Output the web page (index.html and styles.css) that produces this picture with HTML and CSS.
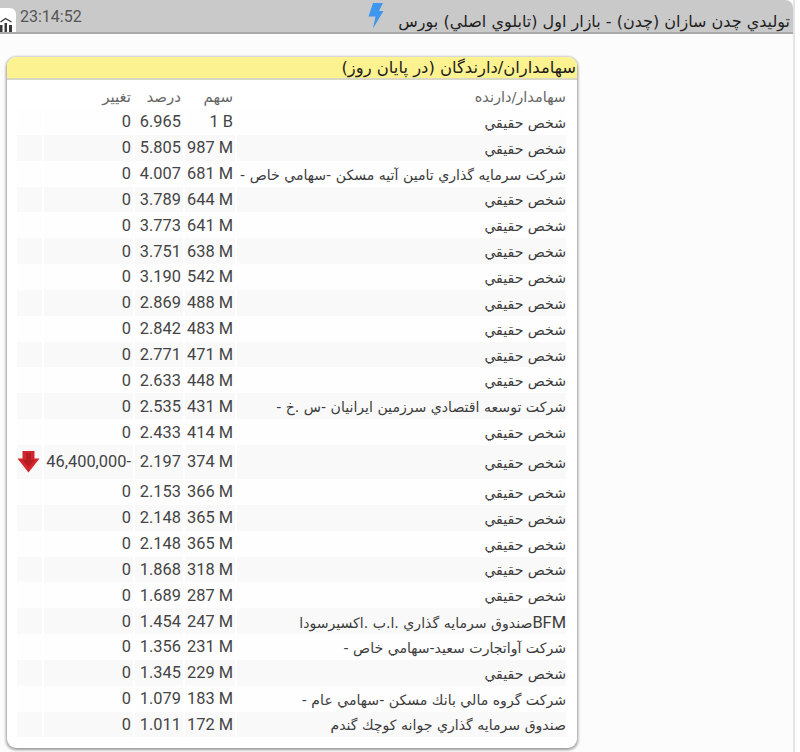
FILE: index.html
```html
<!DOCTYPE html>
<html lang="fa">
<head>
<meta charset="utf-8">
<title>سهامداران</title>
<link rel="stylesheet" href="styles.css">
</head>
<body>
<header class="topbar">
  <div class="chip">
    <svg class="chart" width="14" height="15" viewBox="0 0 14 15"><path d="M0 15V8h2.500v7zM4.500 15V6H7v9zM9 15V8h3v7z" fill="#3a3a3a"/><path d="M.5 5 5.500 1.500l6 3.500" fill="none" stroke="#3a3a3a" stroke-width="1.400"/></svg>
  </div>
  <div class="clock">23:14:52</div>
  <div class="spacer"></div>
  <svg class="bolt" width="17" height="27" viewBox="0 0 17 27"><path d="M6 1h10l-4 8h4.500L6 26.500l2.500-12H1.500z" fill="#3d97ee"/></svg>
  <div class="title" dir="rtl">توليدي چدن سازان (چدن) - بازار اول (تابلوي اصلي) بورس</div>
</header>
<section class="card">
  <h2 class="card-title" dir="rtl">سهامداران/دارندگان (در پايان روز)</h2>
  <table class="holders">
    <thead>
      <tr><th class="c-icon"></th><th class="c-change">تغيير</th><th class="c-pct">درصد</th><th class="c-share">سهم</th><th class="c-name" dir="rtl">سهامدار/دارنده</th></tr>
    </thead>
    <tbody>
      <tr><td></td><td>0</td><td>6.965</td><td>1 B</td><td class="c-name" dir="rtl">شخص حقيقي</td></tr>
      <tr><td></td><td>0</td><td>5.805</td><td>987 M</td><td class="c-name" dir="rtl">شخص حقيقي</td></tr>
      <tr><td></td><td>0</td><td>4.007</td><td>681 M</td><td class="c-name" dir="rtl">شركت سرمايه گذاري تامين آتيه مسكن -سهامي خاص -</td></tr>
      <tr><td></td><td>0</td><td>3.789</td><td>644 M</td><td class="c-name" dir="rtl">شخص حقيقي</td></tr>
      <tr><td></td><td>0</td><td>3.773</td><td>641 M</td><td class="c-name" dir="rtl">شخص حقيقي</td></tr>
      <tr><td></td><td>0</td><td>3.751</td><td>638 M</td><td class="c-name" dir="rtl">شخص حقيقي</td></tr>
      <tr><td></td><td>0</td><td>3.190</td><td>542 M</td><td class="c-name" dir="rtl">شخص حقيقي</td></tr>
      <tr><td></td><td>0</td><td>2.869</td><td>488 M</td><td class="c-name" dir="rtl">شخص حقيقي</td></tr>
      <tr><td></td><td>0</td><td>2.842</td><td>483 M</td><td class="c-name" dir="rtl">شخص حقيقي</td></tr>
      <tr><td></td><td>0</td><td>2.771</td><td>471 M</td><td class="c-name" dir="rtl">شخص حقيقي</td></tr>
      <tr><td></td><td>0</td><td>2.633</td><td>448 M</td><td class="c-name" dir="rtl">شخص حقيقي</td></tr>
      <tr><td></td><td>0</td><td>2.535</td><td>431 M</td><td class="c-name" dir="rtl">شركت توسعه اقتصادي سرزمين ايرانيان -س .خ -</td></tr>
      <tr><td></td><td>0</td><td>2.433</td><td>414 M</td><td class="c-name" dir="rtl">شخص حقيقي</td></tr>
      <tr class="tall"><td class="arrow-cell"><svg width="23" height="23" viewBox="0 0 23 23"><path d="M5.500 1h12v7.500H22.500L11.500 22.500 .5 8.500h5z" fill="#d3262c"/><path d="M9 3h5v7h3.500l-6 7-6-7H9z" fill="#b51d22"/></svg></td><td>46,400,000-</td><td>2.197</td><td>374 M</td><td class="c-name" dir="rtl">شخص حقيقي</td></tr>
      <tr><td></td><td>0</td><td>2.153</td><td>366 M</td><td class="c-name" dir="rtl">شخص حقيقي</td></tr>
      <tr><td></td><td>0</td><td>2.148</td><td>365 M</td><td class="c-name" dir="rtl">شخص حقيقي</td></tr>
      <tr><td></td><td>0</td><td>2.148</td><td>365 M</td><td class="c-name" dir="rtl">شخص حقيقي</td></tr>
      <tr><td></td><td>0</td><td>1.868</td><td>318 M</td><td class="c-name" dir="rtl">شخص حقيقي</td></tr>
      <tr><td></td><td>0</td><td>1.689</td><td>287 M</td><td class="c-name" dir="rtl">شخص حقيقي</td></tr>
      <tr><td></td><td>0</td><td>1.454</td><td>247 M</td><td class="c-name" dir="rtl"><span class="latin">BFM</span>صندوق سرمايه گذاري .ا.ب .اكسيرسودا</td></tr>
      <tr><td></td><td>0</td><td>1.356</td><td>231 M</td><td class="c-name" dir="rtl">شركت آواتجارت سعيد-سهامي خاص -</td></tr>
      <tr><td></td><td>0</td><td>1.345</td><td>229 M</td><td class="c-name" dir="rtl">شخص حقيقي</td></tr>
      <tr><td></td><td>0</td><td>1.079</td><td>183 M</td><td class="c-name" dir="rtl">شركت گروه مالي بانك مسكن -سهامي عام -</td></tr>
      <tr><td></td><td>0</td><td>1.011</td><td>172 M</td><td class="c-name" dir="rtl">صندوق سرمايه گذاري جوانه كوچك گندم</td></tr>
    </tbody>
  </table>
</section>
</body>
</html>
```
FILE: styles.css
```css
* { box-sizing: border-box; }
html { background: #fff; }
html, body { margin: 0; height: 752px; overflow: hidden; }
body {
  background: #fcfcfc;
  font-family: Roboto, "DejaVu Sans", sans-serif;
  color: #4a4a4a;
  border-right: 2px solid #e4e4e4;
  width: 795px;
}
.topbar {
  height: 34px;
  display: flex;
  background: #c9c9c9;
  border-bottom: 2px solid #a9a9a9;
  border-top-right-radius: 8px;
  overflow: hidden;
  align-items: flex-start;
}
.chip {
  width: 16px;
  height: 24px;
  margin-top: 8px;
  background: #fff;
  border-top-right-radius: 6px;
  display: flex;
  align-items: flex-end;
}
.chart { display: block; }
.clock { margin: 7px 0 0 4px; font-size: 16px; line-height: 19px; color: #555; }
.spacer { flex: 1; }
.bolt { margin: 2px 14px 0 0; }
.title { margin: 11px 3px 0 0; font-size: 16px; line-height: 22px; color: #1e1e1e; white-space: nowrap; font-family: "DejaVu Sans", sans-serif; }
.card {
  width: 570px;
  height: 691px;
  margin: 23px 0 0 7px;
  background: #fff;
  border-radius: 9px;
  box-shadow: 0 1px 3px 1px rgba(0,0,0,.4);
  overflow: hidden;
}
.card-title {
  margin: 0;
  height: 23px;
  padding-right: 1px;
  background: #fcf28f;
  border-bottom: 2px solid #d8d8c4;
  font-size: 16.400px;
  font-weight: normal;
  line-height: 22px;
  color: #1e1e1e;
  font-family: "DejaVu Sans", sans-serif;
}
.holders { border-collapse: separate; border-spacing: 2px 0; margin: 0 0 0 8px; table-layout: fixed; width: 553px; }
.holders th, .holders td { padding: 0 2px 0 0; text-align: right; white-space: nowrap; font-weight: normal; overflow: hidden; }
.holders th { height: 29px; padding-top: 4px; font-size: 15px; color: #666; font-family: "DejaVu Sans", sans-serif; }
.holders td { height: 25.850px; font-size: 16.400px; color: #444; }
.holders tbody tr:nth-child(even) td { background: #f9f9f9; }
.holders tbody tr:nth-child(odd) td { background: #fefefe; }
.holders th.c-name { font-size: 14.500px; padding-right: 0; }
.holders td.c-name { font-family: "DejaVu Sans", sans-serif; font-size: 14.100px; padding: 2px 0 0; color: #3c3c3c; }
.latin { font-family: Roboto, sans-serif; font-size: 16.400px; }
.holders tr.tall td { height: 34px; }
.c-icon { width: 25px; }
.c-change { width: 89px; }
.c-pct { width: 48px; }
.c-share { width: 50px; }
.holders td.arrow-cell { padding: 0; }
.arrow-cell svg { display: block; }
```
